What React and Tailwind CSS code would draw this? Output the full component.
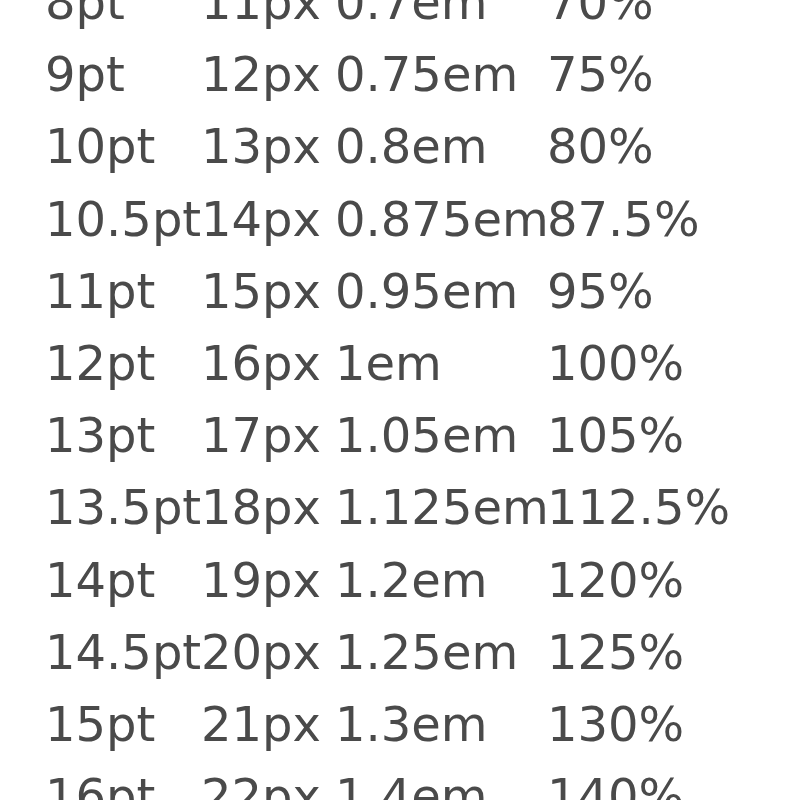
import React from "react";

// font size conversion chart, the part that shows from 8pt down to 16pt
const rows = [
  ["8pt", "11px", "0.7em", "70%"],
  ["9pt", "12px", "0.75em", "75%"],
  ["10pt", "13px", "0.8em", "80%"],
  ["10.5pt", "14px", "0.875em", "87.5%"],
  ["11pt", "15px", "0.95em", "95%"],
  ["12pt", "16px", "1em", "100%"],
  ["13pt", "17px", "1.05em", "105%"],
  ["13.5pt", "18px", "1.125em", "112.5%"],
  ["14pt", "19px", "1.2em", "120%"],
  ["14.5pt", "20px", "1.25em", "125%"],
  ["15pt", "21px", "1.3em", "130%"],
  ["16pt", "22px", "1.4em", "140%"],
];

export default function App() {
  return (
    <div className="w-[800px] h-[800px] overflow-hidden bg-white">
      <div
        className="-mt-[34px] pl-[45px] text-[48px] leading-[72.2px] text-[#4a4a4a] blur-[0.5px]"
        style={{ fontFamily: '"DejaVu Sans", Verdana, sans-serif' }}
      >
        {rows.map((r) => (
          <div key={r[0]} className="grid grid-cols-[156px_134px_212px_1fr] whitespace-nowrap">
            <span>{r[0]}</span>
            <span>{r[1]}</span>
            <span>{r[2]}</span>
            <span>{r[3]}</span>
          </div>
        ))}
      </div>
    </div>
  );
}
